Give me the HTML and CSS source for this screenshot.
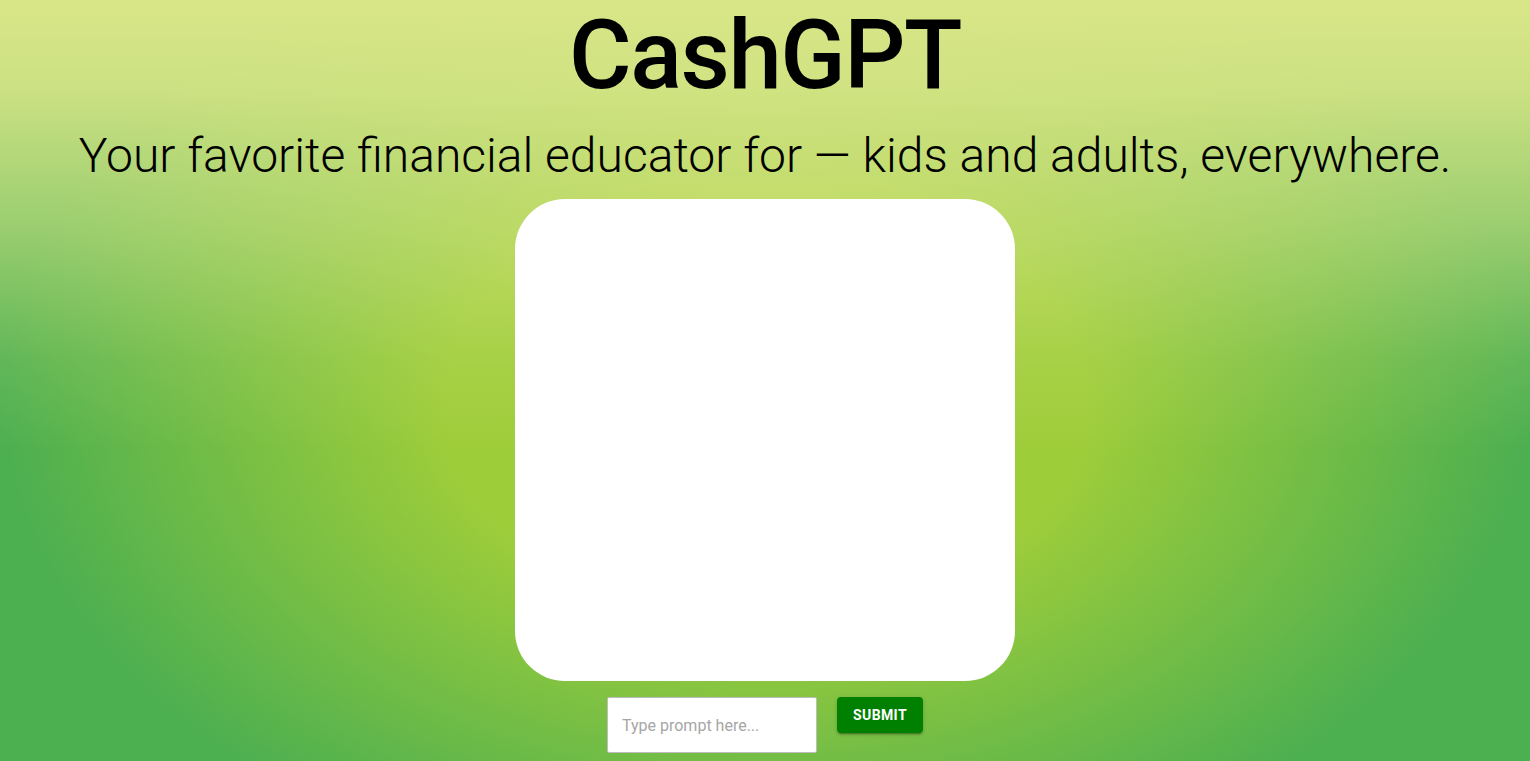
FILE: index.html
```html
<!DOCTYPE html>
<html lang="en">
<head>
<meta charset="utf-8">
<title>CashGPT</title>
<link rel="stylesheet" href="styles.css">
</head>
<body>
<main class="page">
  <h1 class="title">CashGPT</h1>
  <h2 class="subtitle">Your favorite financial educator for — kids and adults, everywhere.</h2>
  <div class="chat-box"></div>
  <form class="prompt-row" onsubmit="return false;">
    <input class="prompt-input" type="text" placeholder="Type prompt here...">
    <button class="submit-btn" type="submit">Submit</button>
  </form>
</main>
</body>
</html>
```
FILE: styles.css
```css
html, body {
  margin: 0;
  padding: 0;
  height: 100%;
}
body {
  font-family: Roboto, "Liberation Sans", sans-serif;
  background:
    linear-gradient(to bottom,
      rgba(217, 230, 136, 1) 0px,
      rgba(217, 230, 136, 0.9) 90px,
      rgba(217, 230, 136, 0.55) 230px,
      rgba(217, 230, 136, 0.15) 360px,
      rgba(217, 230, 136, 0) 450px),
    radial-gradient(765px 500px at 50% 400px, #9ecd3a 42%, #4caf50 100%);
  background-color: #4caf50;
  overflow: hidden;
}
.page {
  display: flex;
  flex-direction: column;
  align-items: center;
}
.title {
  margin: 0;
  font-size: 96px;
  font-weight: 500;
  line-height: 110px;
  letter-spacing: -1.5px;
  color: #000;
}
.subtitle {
  margin: 0;
  padding-top: 18px;
  font-size: 48px;
  font-weight: 300;
  line-height: 56px;
  color: #000;
}
.chat-box {
  width: 500px;
  height: 482px;
  margin-top: 15px;
  background: #fff;
  border-radius: 50px;
}
.prompt-row {
  display: flex;
  align-items: flex-start;
  gap: 20px;
  margin-top: 16px;
}
.prompt-input {
  box-sizing: border-box;
  width: 210px;
  height: 56px;
  border: 1px solid #bdbdbd;
  border-radius: 2px;
  padding: 0 14px;
  font-family: Roboto, "Liberation Sans", sans-serif;
  font-size: 16px;
  color: #222;
  background: #fff;
  outline: none;
}
.prompt-input::placeholder {
  color: #a6a6a6;
}
.submit-btn {
  box-sizing: border-box;
  width: 86px;
  height: 36px;
  border: none;
  border-radius: 4px;
  background: #008000;
  color: #fff;
  font-family: Roboto, "Liberation Sans", sans-serif;
  font-size: 14px;
  font-weight: 700;
  letter-spacing: 0.4px;
  text-transform: uppercase;
  box-shadow: 0 3px 1px -2px rgba(0,0,0,0.2), 0 2px 2px 0 rgba(0,0,0,0.14), 0 1px 5px 0 rgba(0,0,0,0.12);
  cursor: pointer;
}
```
